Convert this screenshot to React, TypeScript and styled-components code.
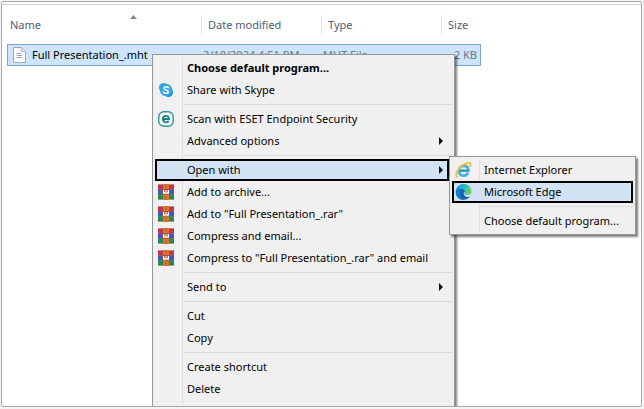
import React from "react";
import styled, { createGlobalStyle, css } from "styled-components";

const GlobalStyle = createGlobalStyle`
  *, *::before, *::after { box-sizing: border-box; }
  body {
    margin: 0;
    background: #f4f4f4;
    color: #000;
    font: 11px/22px "Noto Sans", "Open Sans", sans-serif;
  }
`;

const Page = styled.div`
  height: 100vh;
  padding: 1px 2px 2px 1px;
`;

const Window = styled.main`
  position: relative;
  height: 100%;
  padding-top: 2px;
  overflow: hidden;
  border: 1px solid #a9a9a9;
  border-radius: 2px;
  background: #fff;
`;

const FileList = styled.section`
  padding: 10px 5px;
  border-top: 1px solid #d5d5d5;
`;

const Table = styled.table`
  width: 474px;
  table-layout: fixed;
  border-collapse: separate;
  border-spacing: 0;
`;

const HeadCell = styled.th<{ $width: number }>`
  width: ${(p) => p.$width}px;
  padding: 0;
  font-weight: 400;
  text-align: left;
  vertical-align: top;
`;

const SortButton = styled.button<{ $first?: boolean }>`
  position: relative;
  display: block;
  width: 100%;
  height: 20px;
  padding: 0 ${(p) => (p.$first ? 3 : 6)}px;
  border: 0;
  border-left: ${(p) => (p.$first ? "0" : "1px solid #e2e5ea")};
  background: none;
  color: #4c607a;
  font: inherit;
  line-height: 20px;
  text-align: left;
`;

const SortMark = styled.svg`
  position: absolute;
  top: 0;
  left: calc(50% + 26px);
`;

const FileRow = styled.tr`
  color: #6d7886;

  td {
    height: 22px;
    padding: 0 3px 0 2px;
    border: solid #7aa7cf;
    border-width: 1px 0;
    background: #cce4fc;
    line-height: 18px;
    white-space: nowrap;
  }
  td:first-child { border-left-width: 1px; padding-left: 5px; }
  td:last-child { border-right-width: 1px; text-align: right; }
`;

const HeadRow = styled.tr`
  th { height: 29px; }
`;

const FileName = styled.span`
  display: flex;
  align-items: center;
  gap: 6px;
  color: #000;
`;

const MenuPanel = styled.ul<{ $gutter: number }>`
  position: absolute;
  margin: 0;
  padding: 2px;
  list-style: none;
  border: 1px solid #979797;
  background:
    linear-gradient(#e0e0e0, #e0e0e0) ${(p) => p.$gutter}px 2px / 1px calc(100% - 4px) no-repeat,
    #f0f0f0;
  box-shadow: 2px 2px 2px rgba(0, 0, 0, 0.5);
`;

const ContextMenu = styled(MenuPanel)`
  top: 52px;
  left: 150px;
  width: 303px;
  height: 400px;
`;

const SubMenu = styled(MenuPanel)`
  top: -3px;
  left: 294px;
  width: 187px;
`;

const Item = styled.li`
  position: relative;
`;

const Separator = styled.li<{ $inset: number }>`
  height: 7px;
  padding: 3px 0;

  &::before {
    content: "";
    display: block;
    height: 1px;
    margin-left: ${(p) => p.$inset}px;
    background: #d9d9d9;
  }
`;

const MenuButton = styled.button<{ $active?: boolean; $strong?: boolean; $open?: boolean }>`
  display: flex;
  align-items: center;
  width: ${(p) => (p.$open ? "calc(100% - 3px)" : "100%")};
  height: 22px;
  padding: 0 ${(p) => (p.$open ? 6 : 9)}px 0 3px;
  border: 0;
  background: none;
  color: #000;
  font: inherit;
  font-weight: ${(p) => (p.$strong ? 700 : 400)};
  text-align: left;
  white-space: nowrap;

  ${(p) =>
    p.$active &&
    css`
      background: #d1e2f2;
      box-shadow: inset 0 0 0 2px #000;
    `}
`;

const IconSlot = styled.span`
  display: flex;
  flex: none;
  width: 29px;
`;

const Label = styled.span`
  flex: 1;
`;

const FileIcon = () => (
  <svg width="13" height="16" viewBox="0 0 13 16" aria-hidden="true">
    <path d="M.5.5h8l4 4v11H.5z" fill="#fff" stroke="#a1a7ac" />
    <path d="M8.500.5v4h4" fill="#eee" stroke="#b5babe" />
    <path d="M3.500 6.500h5M3.500 8.500h6M3.500 10.500h6" stroke="#9aa8b3" />
  </svg>
);

const SkypeIcon = () => (
  <svg width="16" height="16" viewBox="0 0 16 16" aria-hidden="true">
    <circle cx="5.500" cy="5.500" r="4.500" fill="#2ea3e4" />
    <circle cx="10.500" cy="10.500" r="4.500" fill="#1f8ed8" />
    <circle cx="8" cy="8" r="6.200" fill="#31a9e9" />
    <path d="M10.400 5.700C9.600 4.300 5.900 4.300 5.900 6.200c0 2 4.400 1.300 4.400 3.500 0 2.100-4 2-4.800.4" fill="none" stroke="#fff" strokeWidth="1.500" strokeLinecap="round" />
  </svg>
);

const EsetIcon = () => (
  <svg width="16" height="16" viewBox="0 0 16 16" aria-hidden="true">
    <rect x=".8" y=".8" width="14.400" height="14.400" rx="5" fill="#fff" stroke="#2d9696" strokeWidth="1.400" />
    <path d="M5 8h6c0-4.200-6-4.200-6 0 0 3.800 4.200 4 5.800 2.200" fill="none" stroke="#128284" strokeWidth="1.900" />
  </svg>
);

const RarIcon = () => (
  <svg width="16" height="16" viewBox="0 0 16 16" aria-hidden="true">
    <path d="M0 .5h16v5H0z" fill="#c8324c" />
    <path d="M0 5.500h16v5H0z" fill="#4355b5" />
    <path d="M0 10.500h16v5H0z" fill="#298a4c" />
    <path d="M0 1h16M0 5.500h16M0 10.500h16M0 15h16" stroke="#47364d" strokeOpacity=".3" />
    <path d="M5 0h6v16H5z" fill="#dc762c" />
    <path d="M4.500 5h7v5.500h-7z" fill="#a0502f" />
    <path d="M5.600 6v3h4.800V6" fill="none" stroke="#fff" strokeWidth="1.300" />
    <path d="M8 6v2" stroke="#fff" />
    <path d="M8 0v4M8 12v4" stroke="#b65a26" />
  </svg>
);

const ExplorerIcon = () => (
  <svg width="17" height="16" viewBox="0 0 17 16" aria-hidden="true">
    <path d="M4.300 8.700h9.200c.3-6.600-9.500-6.300-9.500.2 0 5.900 7.300 6.100 9 1.800" fill="none" stroke="#49afe0" strokeWidth="2.700" />
    <path d="M4.300 8.700h9.200" stroke="#2c8ccc" strokeWidth="1.300" />
    <path d="M3.200 15C-2.400 14 4.500 4 11.500 1.400c4.300-1.500 4.800.7 3.500 3.400" fill="none" stroke="#e9bf32" strokeWidth="1.700" />
  </svg>
);

const EdgeIcon = () => (
  <svg width="17" height="16" viewBox="0 0 17 16" aria-hidden="true">
    <defs>
      <linearGradient id="edgeTop" x1="0" x2="1" y1="0" y2=".4">
        <stop offset="0" stopColor="#158ed0" />
        <stop offset=".5" stopColor="#25b8d3" />
        <stop offset="1" stopColor="#60d45e" />
      </linearGradient>
    </defs>
    <circle cx="8.500" cy="8" r="7.800" fill="#1262b5" />
    <path d="M.7 8C1 3.500 4.300.2 8.600.2c4.500 0 7.700 3.200 7.700 6.500 0 3-2.300 4.300-4.500 4.300-1.500 0-2.500-.6-2.300-1.200.8-1.200.9-4.300-2.500-4.800C4 4.600 1.400 6 .7 8z" fill="url(#edgeTop)" />
    <path d="M9.600 7.500C8 8.500 8.200 12.500 12.800 13c1.300.1 2.400-.8 3-1.500l.7-4.200c-.5 2.600-2.500 3.800-4.600 3.800-1.600 0-2.700-.7-2.300-3.600z" fill="#dceafa" />
    <path d="M6.500 6.500c-3 3.400-1 7.900 3.200 9.200-5 .8-8.900-3.100-9-7.300C2 6.400 4.200 5.600 6.500 6.500z" fill="#157ccc" />
  </svg>
);

const Arrow = () => (
  <svg width="4" height="8" viewBox="0 0 4 8" aria-hidden="true">
    <path d="M0 0l4 4-4 4z" fill="#111" />
  </svg>
);

type Entry =
  | "separator"
  | {
      label: string;
      icon?: React.ReactNode;
      strong?: boolean;
      active?: boolean;
      arrow?: boolean;
      children?: React.ReactNode;
    };

const Entries = ({ entries, inset }: { entries: Entry[]; inset: number }) => (
  <>
    {entries.map((entry, index) =>
      entry === "separator" ? (
        <Separator key={index} role="separator" $inset={inset} />
      ) : (
        <Item key={index} role="none">
          <MenuButton
            type="button"
            role="menuitem"
            aria-haspopup={entry.arrow ? "menu" : undefined}
            aria-expanded={entry.children ? true : undefined}
            $active={entry.active}
            $strong={entry.strong}
            $open={Boolean(entry.children)}
          >
            <IconSlot>{entry.icon}</IconSlot>
            <Label>{entry.label}</Label>
            {entry.arrow && <Arrow />}
          </MenuButton>
          {entry.children}
        </Item>
      ),
    )}
  </>
);

const programs: Entry[] = [
  { label: "Internet Explorer", icon: <ExplorerIcon /> },
  { label: "Microsoft Edge", icon: <EdgeIcon />, active: true },
  "separator",
  { label: "Choose default program..." },
];

const actions: Entry[] = [
  { label: "Choose default program...", strong: true },
  { label: "Share with Skype", icon: <SkypeIcon /> },
  "separator",
  { label: "Scan with ESET Endpoint Security", icon: <EsetIcon /> },
  { label: "Advanced options", arrow: true },
  "separator",
  {
    label: "Open with",
    active: true,
    arrow: true,
    children: (
      <SubMenu role="menu" aria-label="Open with" $gutter={29}>
        <Entries entries={programs} inset={29} />
      </SubMenu>
    ),
  },
  { label: "Add to archive...", icon: <RarIcon /> },
  { label: 'Add to "Full Presentation_.rar"', icon: <RarIcon /> },
  { label: "Compress and email...", icon: <RarIcon /> },
  { label: 'Compress to "Full Presentation_.rar" and email', icon: <RarIcon /> },
  "separator",
  { label: "Send to", arrow: true },
  "separator",
  { label: "Cut" },
  { label: "Copy" },
  "separator",
  { label: "Create shortcut" },
  { label: "Delete" },
];

const columns = [
  { label: "Name", width: 194 },
  { label: "Date modified", width: 120 },
  { label: "Type", width: 120 },
  { label: "Size", width: 40 },
];

export default function App() {
  return (
    <Page>
      <GlobalStyle />
      <Window>
        <FileList>
          <Table>
            <thead>
              <HeadRow>
                {columns.map((column, index) => (
                  <HeadCell key={column.label} scope="col" $width={column.width}>
                    <SortButton type="button" $first={index === 0}>
                      {column.label}
                      {index === 0 && (
                        <SortMark width="7" height="4" viewBox="0 0 7 4" aria-hidden="true">
                          <path d="M0 4l3.500-4L7 4z" fill="#7d8794" />
                        </SortMark>
                      )}
                    </SortButton>
                  </HeadCell>
                ))}
              </HeadRow>
            </thead>
            <tbody>
              <FileRow>
                <td>
                  <FileName>
                    <FileIcon />
                    Full Presentation_.mht
                  </FileName>
                </td>
                <td>2/18/2024 4:51 PM</td>
                <td>MHT File</td>
                <td>2 KB</td>
              </FileRow>
            </tbody>
          </Table>
        </FileList>
        <ContextMenu role="menu" aria-label="File actions" $gutter={29}>
          <Entries entries={actions} inset={29} />
        </ContextMenu>
      </Window>
    </Page>
  );
}
